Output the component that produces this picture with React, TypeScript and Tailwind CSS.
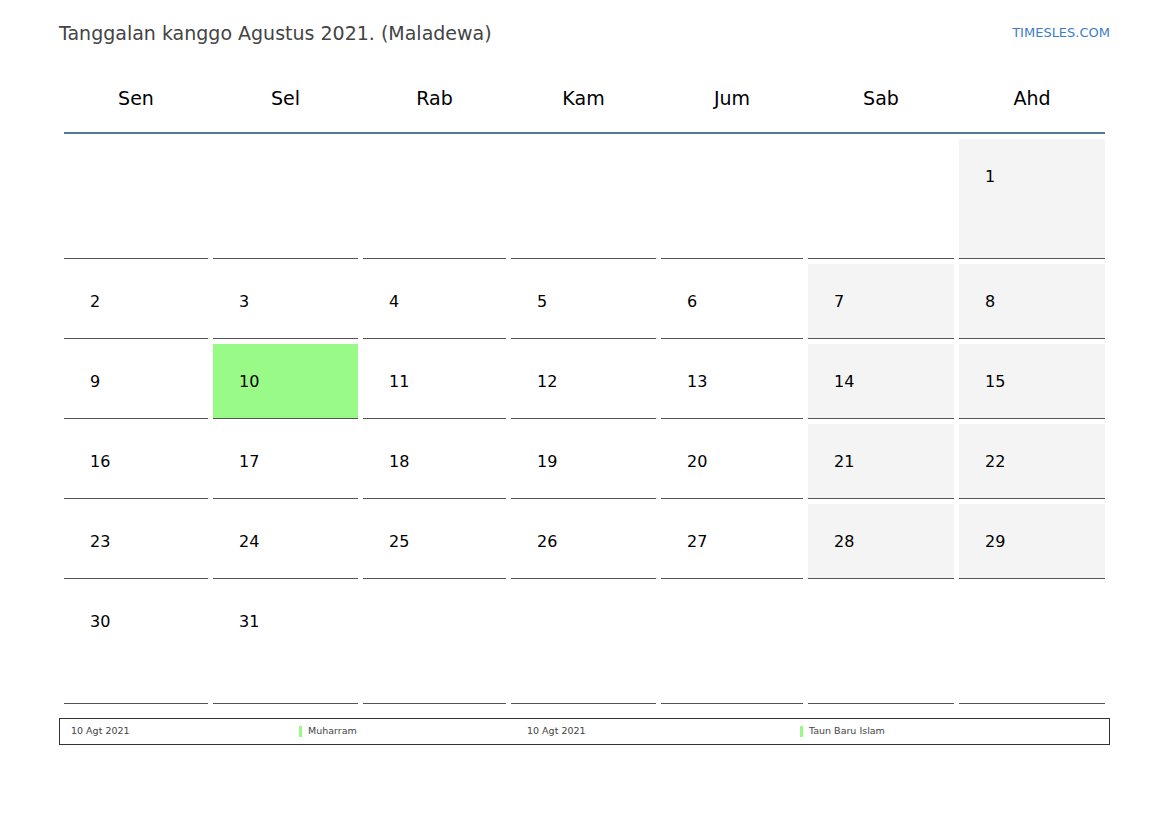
const font = { fontFamily: '"DejaVu Sans", Verdana, sans-serif' };

const days = ['Sen', 'Sel', 'Rab', 'Kam', 'Jum', 'Sab', 'Ahd'];

// August 2021 starts on Sunday (Ahd)
const weeks: (number | null)[][] = [
  [null, null, null, null, null, null, 1],
  [2, 3, 4, 5, 6, 7, 8],
  [9, 10, 11, 12, 13, 14, 15],
  [16, 17, 18, 19, 20, 21, 22],
  [23, 24, 25, 26, 27, 28, 29],
  [30, 31, null, null, null, null, null],
];

const holiday = 10;

const cols = 'grid grid-cols-[144px_145px_143px_145px_142px_146px_146px] gap-x-[5px]';

const App = () => {
  return (
    <div className="w-[1169px] h-[827px] bg-white text-black" style={font}>
      <div className="mx-auto w-[1051px]">
        {/* Title */}
        <div className="flex h-[66px] items-center justify-between">
          <h1 className="text-[19px] text-[#444]">Tanggalan kanggo Agustus 2021. (Maladewa)</h1>
          <a className="text-[13px] text-[#3b7dc8]">TIMESLES.COM</a>
        </div>

        <div className="px-[5px]">
          {/* Weekday header */}
          <div className={`${cols} h-[68px] border-b-2 border-[#55779f]`}>
            {days.map((d) => (
              <div key={d} className="flex items-center justify-center text-[19px] pb-[2px]">
                {d}
              </div>
            ))}
          </div>

          {/* Weeks */}
          <div className="mt-[5px] flex flex-col gap-[5px]">
            {weeks.map((week, wi) => {
              const tall = wi === 0 || wi === weeks.length - 1;
              return (
                <div key={wi} className={cols}>
                  {week.map((day, di) => {
                    const weekend = di >= 5 && day !== null;
                    const isHoliday = day === holiday;
                    return (
                      <div
                        key={di}
                        className={`${tall ? 'h-[120px]' : 'h-[75px]'} border-b border-[#555] pl-[26px] pt-[26px] text-[16px] ${
                          isHoliday ? 'bg-[#99fa88]' : weekend ? 'bg-[#f4f4f4]' : 'bg-white'
                        }`}
                      >
                        {day}
                      </div>
                    );
                  })}
                </div>
              );
            })}
          </div>
        </div>

        {/* Holiday legend */}
        <div className="mt-[14px] flex h-[27px] items-center border border-[#333] pl-[11px] text-[9.5px] text-[#444]">
          <span className="w-[228px]">10 Agt 2021</span>
          <span className="h-[11px] w-[3px] bg-[#99fa88] mr-[6px]" />
          <span className="w-[219px]">Muharram</span>
          <span className="w-[273px]">10 Agt 2021</span>
          <span className="h-[11px] w-[3px] bg-[#99fa88] mr-[6px]" />
          <span>Taun Baru Islam</span>
        </div>
      </div>
    </div>
  );
};

export default App;
